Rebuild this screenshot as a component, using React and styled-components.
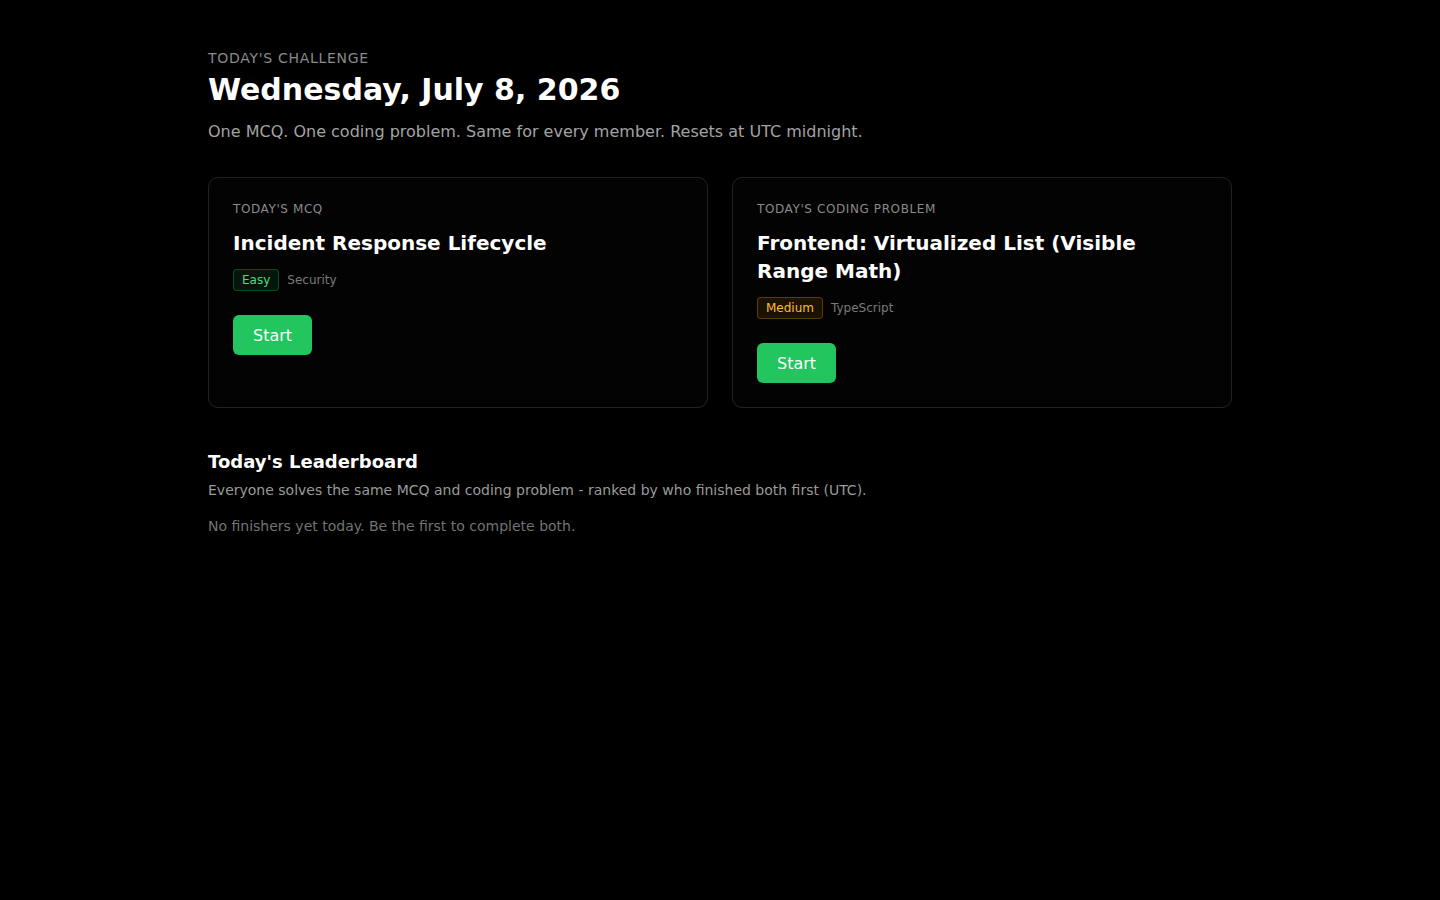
import React from 'react';
import styled, { createGlobalStyle } from 'styled-components';

const GlobalStyle = createGlobalStyle`
    * {
        box-sizing: border-box;
    }

    html, body {
        margin: 0;
        background: #000;
        color: #fff;
        font-family: "DejaVu Sans", "Noto Sans", sans-serif;
    }
`;

const challenges = [
    {
        label: "Today's MCQ",
        title: 'Incident Response Lifecycle',
        difficulty: 'Easy',
        topic: 'Security',
    },
    {
        label: "Today's Coding Problem",
        title: 'Frontend: Virtualized List (Visible Range Math)',
        difficulty: 'Medium',
        topic: 'TypeScript',
    },
];

export default () => (
    <>
        <GlobalStyle />
        <Page>
            <Header>
                <Eyebrow>Today's Challenge</Eyebrow>
                <Heading>Wednesday, July 8, 2026</Heading>
                <Intro>One MCQ. One coding problem. Same for every member. Resets at UTC midnight.</Intro>
            </Header>

            <CardGrid>
                {challenges.map((c) => (
                    <Card key={c.label}>
                        <CardLabel>{c.label}</CardLabel>
                        <CardTitle>{c.title}</CardTitle>
                        <MetaRow>
                            <Badge level={c.difficulty}>{c.difficulty}</Badge>
                            <Topic>{c.topic}</Topic>
                        </MetaRow>
                        <StartButton type="button">Start</StartButton>
                    </Card>
                ))}
            </CardGrid>

            <Leaderboard>
                <SectionTitle>Today's Leaderboard</SectionTitle>
                <SectionNote>
                    Everyone solves the same MCQ and coding problem - ranked by who finished both first (UTC).
                </SectionNote>
                <Empty>No finishers yet today. Be the first to complete both.</Empty>
            </Leaderboard>
        </Page>
    </>
);

const Page = styled.main`
    max-width: 1024px;
    margin: 0 auto;
    padding: 48px 0;
`;

const Header = styled.header`
    display: flex;
    flex-direction: column;
`;

const Eyebrow = styled.div`
    font-size: 14px;
    line-height: 20px;
    letter-spacing: 0.05em;
    text-transform: uppercase;
    color: #8a8a8a;
`;

const Heading = styled.h1`
    margin: 4px 0 0;
    font-size: 30px;
    line-height: 36px;
    font-weight: 700;
`;

const Intro = styled.p`
    margin: 12px 0 0;
    font-size: 16px;
    line-height: 24px;
    color: #a3a3a3;
`;

const CardGrid = styled.div`
    display: grid;
    grid-template-columns: 1fr 1fr;
    gap: 24px;
    margin-top: 33px;
`;

const Card = styled.section`
    display: flex;
    flex-direction: column;
    align-items: flex-start;
    padding: 23px 24px 24px;
    border: 1px solid #222;
    border-radius: 10px;
    background: #030303;
`;

const CardLabel = styled.div`
    font-size: 12px;
    line-height: 16px;
    letter-spacing: 0.05em;
    text-transform: uppercase;
    color: #8a8a8a;
`;

const CardTitle = styled.h2`
    margin: 12px 0 0;
    font-size: 20px;
    line-height: 28px;
    font-weight: 700;
`;

const MetaRow = styled.div`
    display: flex;
    align-items: center;
    gap: 8px;
    margin-top: 12px;
`;

const badgeColours = {
    Easy: { text: '#4ade80', bg: 'rgba(34, 197, 94, 0.1)', border: 'rgba(34, 197, 94, 0.3)' },
    Medium: { text: '#fbbf24', bg: 'rgba(245, 158, 11, 0.1)', border: 'rgba(245, 158, 11, 0.3)' },
};

const Badge = styled.span`
    padding: 2px 8px;
    font-size: 12px;
    line-height: 16px;
    border-radius: 4px;
    color: ${(p) => badgeColours[p.level].text};
    background: ${(p) => badgeColours[p.level].bg};
    border: 1px solid ${(p) => badgeColours[p.level].border};
`;

const Topic = styled.span`
    font-size: 12px;
    line-height: 16px;
    color: #7a7a7a;
`;

const StartButton = styled.button`
    margin-top: 24px;
    height: 40px;
    padding: 0 20px;
    border: none;
    border-radius: 6px;
    background: #22c55e;
    color: #fff;
    font-family: inherit;
    font-size: 16px;
    cursor: pointer;
`;

const Leaderboard = styled.section`
    margin-top: 40px;
`;

const SectionTitle = styled.h3`
    margin: 0;
    font-size: 18px;
    line-height: 28px;
    font-weight: 700;
`;

const SectionNote = styled.p`
    margin: 4px 0 0;
    font-size: 14px;
    line-height: 20px;
    color: #9a9a9a;
`;

const Empty = styled.p`
    margin: 16px 0 0;
    font-size: 14px;
    line-height: 20px;
    color: #737373;
`;
